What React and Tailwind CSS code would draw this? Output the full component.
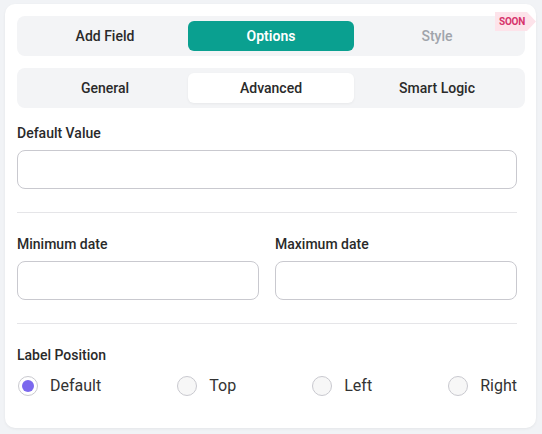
import React from "react";

function Tabs({ items, active, variant }) {
  return (
    <div className="flex rounded-lg bg-[#f3f4f6] p-[5px]">
      {items.map((it) => {
        const on = it.label === active;
        const activeCls =
          variant === "solid"
            ? "bg-[#0aa090] text-white font-semibold"
            : "bg-white text-[#2a2a2a] shadow-[0_1px_3px_rgba(0,0,0,0.05)]";
        return (
          <div
            key={it.label}
            className={
              "relative flex h-[30px] flex-1 items-center justify-center rounded-md text-[14px] font-medium " +
              (on ? activeCls : it.muted ? "text-[#a0a4ab]" : "text-[#2a2a2a]")
            }
          >
            {it.label}
          </div>
        );
      })}
    </div>
  );
}

function Radio({ label, checked }) {
  return (
    <label className="flex items-center gap-[12px]">
      {checked ? (
        <span className="flex h-[20px] w-[20px] items-center justify-center rounded-full border border-[#c9c9cf] bg-white">
          <span className="h-[12px] w-[12px] rounded-full bg-[#7b68ee]" />
        </span>
      ) : (
        <span className="h-[20px] w-[20px] rounded-full border border-[#c9c9cf] bg-[#f7f7f7]" />
      )}
      <span className="text-[16px] leading-[20px] text-[#333]">{label}</span>
    </label>
  );
}

function Field() {
  return <div className="mt-[7px] h-[39px] w-full rounded-lg border border-[#c9c9cf] bg-white" />;
}

export default function App() {
  return (
    <div
      className="h-[434px] w-[542px] bg-[#f1f3f6] pl-[5px] pt-[4px]"
      style={{ fontFamily: "Roboto, 'Noto Sans', sans-serif" }}
    >
      <div className="relative h-[424px] w-[531px] rounded-[10px] bg-white pl-[12px] pt-[12px] shadow-[0_1px_3px_rgba(0,0,0,0.06)]">
        <div className="w-[508px]">
          <div className="relative">
            <Tabs
              variant="solid"
              active="Options"
              items={[{ label: "Add Field" }, { label: "Options" }, { label: "Style", muted: true }]}
            />
            {/* flag-shaped "soon" badge */}
            <div className="absolute right-[-11px] top-[-4px] flex h-[19px] items-center">
              <span className="flex h-full items-center bg-[#fde3ea] pl-[4px] pr-[2px] text-[10px] font-bold tracking-tight text-[#d6336c]">
                SOON
              </span>
              <svg width="9" height="19" viewBox="0 0 9 19">
                <path d="M0 0 L9 9.5 L0 19 Z" fill="#fde3ea" />
              </svg>
            </div>
          </div>
          <div className="mt-[12px]">
            <Tabs
              variant="light"
              active="Advanced"
              items={[{ label: "General" }, { label: "Advanced" }, { label: "Smart Logic" }]}
            />
          </div>
        </div>

        <div className="w-[500px]">
          <div className="mt-[15px] text-[14px] leading-[20px] font-medium text-[#2a2a2a]">Default Value</div>
          <Field />

          <div className="mt-[23px] h-px bg-[#e5e5e8]" />

          <div className="mt-[21px] flex gap-[16px]">
            <div className="flex-1">
              <div className="text-[14px] leading-[20px] font-medium text-[#2a2a2a]">Minimum date</div>
              <Field />
            </div>
            <div className="flex-1">
              <div className="text-[14px] leading-[20px] font-medium text-[#2a2a2a]">Maximum date</div>
              <Field />
            </div>
          </div>

          <div className="mt-[23px] h-px bg-[#e5e5e8]" />

          <div className="mt-[21px] text-[14px] leading-[20px] font-medium text-[#2a2a2a]">Label Position</div>
          <div className="mt-[11px] flex items-center justify-between pl-[1px]">
            <Radio label="Default" checked />
            <Radio label="Top" />
            <Radio label="Left" />
            <Radio label="Right" />
          </div>
        </div>
      </div>
    </div>
  );
}
